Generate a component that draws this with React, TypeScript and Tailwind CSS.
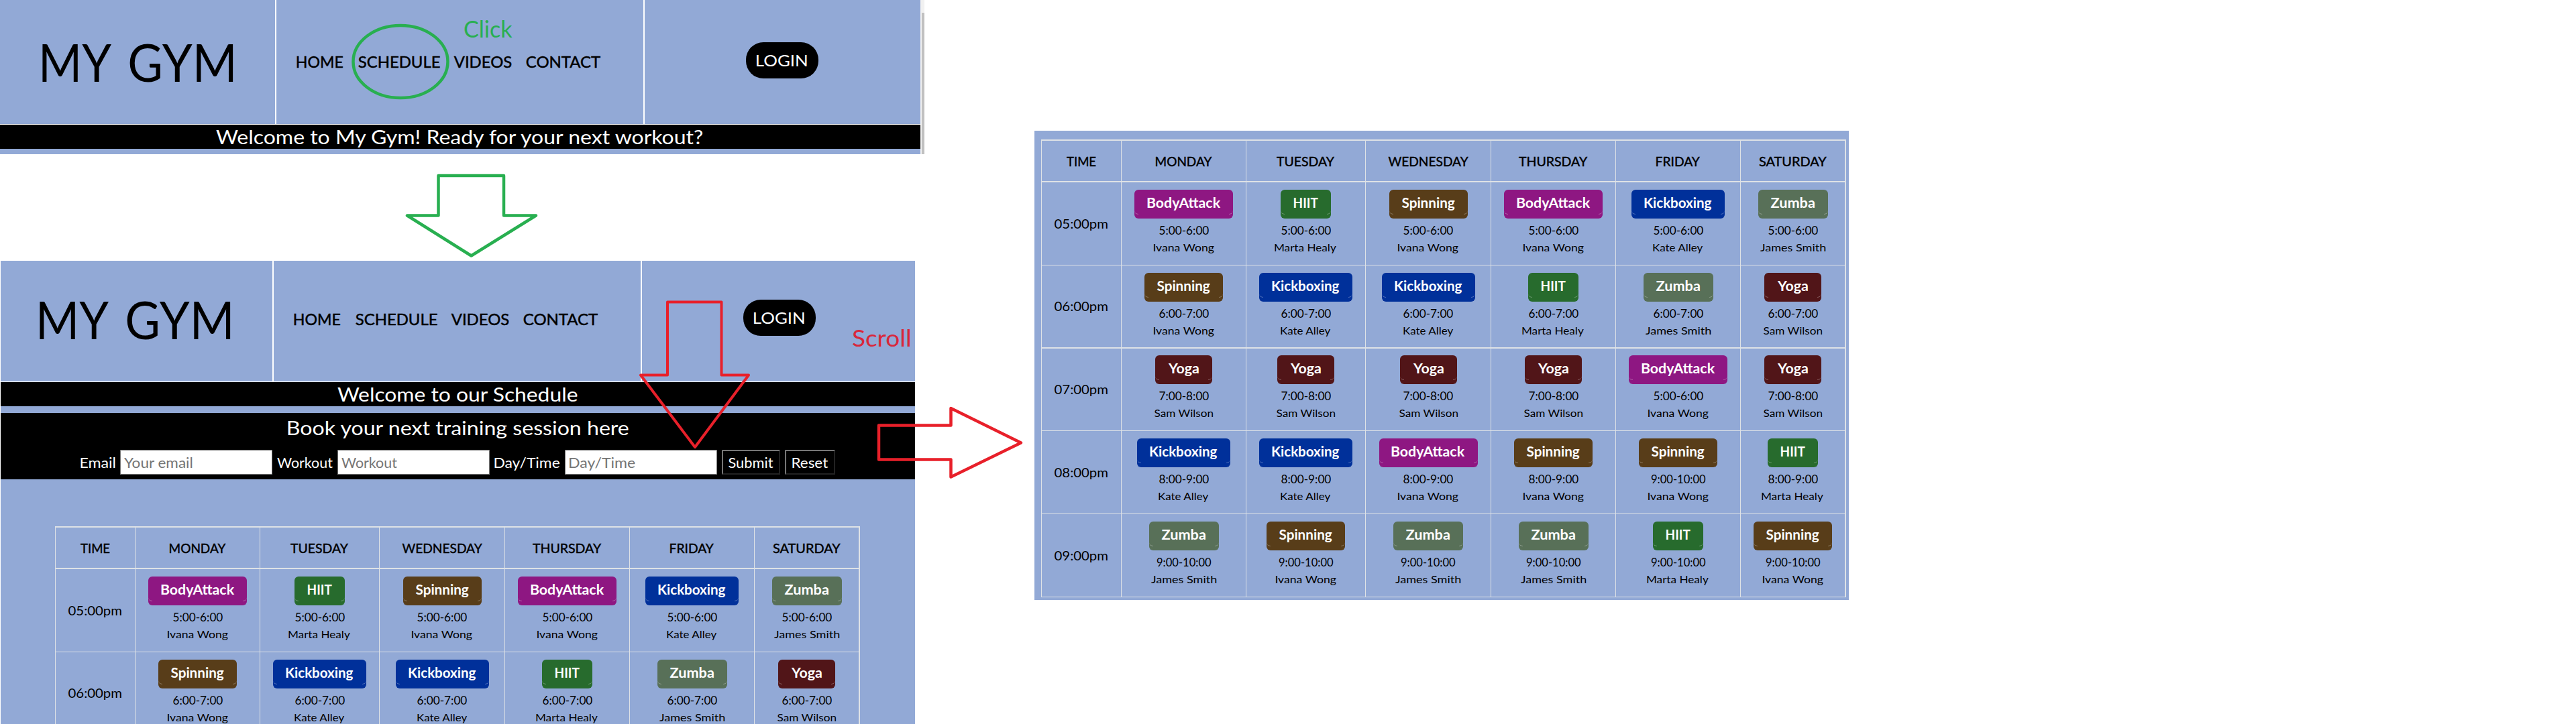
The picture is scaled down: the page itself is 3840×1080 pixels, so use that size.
import { useLayoutEffect, useRef, type ReactNode } from "react";

/** Text whose inked width is set to a given number of pixels. */
function Fit({ w, children, className = "" }: { w: number; children: string; className?: string }) {
  const ref = useRef<HTMLSpanElement>(null);
  useLayoutEffect(() => {
    const el = ref.current;
    if (!el) return;
    const cs = getComputedStyle(el);
    const ctx = document.createElement("canvas").getContext("2d");
    if (!ctx) return;
    ctx.font = `${cs.fontWeight} ${cs.fontSize} ${cs.fontFamily}`;
    const m = ctx.measureText(children);
    const r = el.offsetWidth / m.width;
    const ink = (m.actualBoundingBoxLeft + m.actualBoundingBoxRight) * r;
    const shift = ((m.width - (m.actualBoundingBoxRight - m.actualBoundingBoxLeft)) / 2) * r;
    const k = w / ink;
    el.style.transform = `translateX(${shift * k}px) scaleX(${k})`;
  }, [w, children]);
  return (
    <span className={"inline-flex justify-center whitespace-nowrap " + className} style={{ width: w }}>
      <span ref={ref} className="inline-block shrink-0">
        {children}
      </span>
    </span>
  );
}

const NAV: [string, number][] = [
  ["HOME", 68.5],
  ["SCHEDULE", 121.5],
  ["VIDEOS", 85.5],
  ["CONTACT", 110.5],
];

function Header({ tall }: { tall?: boolean }) {
  return (
    <header className={"flex border-b border-white " + (tall ? "h-[186px]" : "h-[181px]")}>
      <div className={"border-r-2 border-white " + (tall ? "w-[412px] pl-[63px] pt-11" : "w-[407px] pl-[58px] pt-[39px]")}>
        <h1 className="flex h-24 items-center gap-[27px] text-[77px] leading-none">
          <Fit w={103}>MY</Fit>
          <Fit w={155}>GYM</Fit>
        </h1>
      </div>
      <nav
        className={
          "flex w-[549px] items-start gap-[22px] border-r-2 border-white pl-[31px] text-2xl leading-6 [-webkit-text-stroke:0.5px_black] " +
          (tall ? "pt-20" : "pt-[75px]")
        }
      >
        {NAV.map(([t, w]) => (
          <Fit key={t} w={w}>
            {t}
          </Fit>
        ))}
      </nav>
      <div className={"pl-[151px] " + (tall ? "pt-[63px]" : "pt-[58px]")}>
        <button className="flex h-[54px] w-[108px] items-center justify-center rounded-[26px] bg-black text-2xl text-white">
          <Fit w={75}>LOGIN</Fit>
        </button>
      </div>
    </header>
  );
}

function Banner({ w, children }: { w: number; children: string }) {
  return (
    <div className="flex h-9 items-center justify-center bg-black pr-0.5 text-[28.5px] leading-9 text-white">
      <Fit w={w}>{children}</Fit>
    </div>
  );
}

function Field({ w, label, pw, placeholder }: { w: number; label: string; pw: number; placeholder: string }) {
  return (
    <label className="flex items-center gap-[7px]">
      <Fit w={w}>{label}</Fit>
      <span className="flex h-[37px] w-[227px] items-center border border-[#767676] bg-white pl-[5px] text-[#757575]">
        <Fit w={pw}>{placeholder}</Fit>
      </span>
    </label>
  );
}

const DAYS: [string, number][] = [
  ["TIME", 44],
  ["MONDAY", 84],
  ["TUESDAY", 86],
  ["WEDNESDAY", 120],
  ["THURSDAY", 103],
  ["FRIDAY", 66],
  ["SATURDAY", 101],
];

const CLASSES: Record<string, { bg: string; w: number }> = {
  BodyAttack: { bg: "bg-[#8e1782] w-[147px]", w: 109 },
  HIIT: { bg: "bg-[#276b2d] w-[75px]", w: 36 },
  Spinning: { bg: "bg-[#583d19] w-[117px]", w: 80 },
  Kickboxing: { bg: "bg-[#00309a] w-[139px]", w: 101 },
  Zumba: { bg: "bg-[#587058] w-[104px]", w: 66 },
  Yoga: { bg: "bg-[#511518] w-[85px]", w: 47 },
};

const TRAINERS: Record<string, number> = {
  "Ivana Wong": 90,
  "Marta Healy": 93,
  "Kate Alley": 75,
  "James Smith": 97,
  "Sam Wilson": 88,
};

const IW = "Ivana Wong";
const MH = "Marta Healy";
const KA = "Kate Alley";
const JS = "James Smith";
const SW = "Sam Wilson";

type Session = [string, string, string];
const ROWS: { time: string; h: string; pad: string; cells: Session[] }[] = [
  {
    time: "05:00pm",
    h: "h-[124px] border-b",
    pad: "pt-[11px]",
    cells: [
      ["BodyAttack", "5:00-6:00", IW],
      ["HIIT", "5:00-6:00", MH],
      ["Spinning", "5:00-6:00", IW],
      ["BodyAttack", "5:00-6:00", IW],
      ["Kickboxing", "5:00-6:00", KA],
      ["Zumba", "5:00-6:00", JS],
    ],
  },
  {
    time: "06:00pm",
    h: "h-[124px] border-b-2",
    pad: "pt-[11px]",
    cells: [
      ["Spinning", "6:00-7:00", IW],
      ["Kickboxing", "6:00-7:00", KA],
      ["Kickboxing", "6:00-7:00", KA],
      ["HIIT", "6:00-7:00", MH],
      ["Zumba", "6:00-7:00", JS],
      ["Yoga", "6:00-7:00", SW],
    ],
  },
  {
    time: "07:00pm",
    h: "h-[123px] border-b",
    pad: "pt-2.5",
    cells: [
      ["Yoga", "7:00-8:00", SW],
      ["Yoga", "7:00-8:00", SW],
      ["Yoga", "7:00-8:00", SW],
      ["Yoga", "7:00-8:00", SW],
      ["BodyAttack", "5:00-6:00", IW],
      ["Yoga", "7:00-8:00", SW],
    ],
  },
  {
    time: "08:00pm",
    h: "h-[124px] border-b",
    pad: "pt-[11px]",
    cells: [
      ["Kickboxing", "8:00-9:00", KA],
      ["Kickboxing", "8:00-9:00", KA],
      ["BodyAttack", "8:00-9:00", IW],
      ["Spinning", "8:00-9:00", IW],
      ["Spinning", "9:00-10:00", IW],
      ["HIIT", "8:00-9:00", MH],
    ],
  },
  {
    time: "09:00pm",
    h: "h-[124px] border-b",
    pad: "pt-[11px]",
    cells: [
      ["Zumba", "9:00-10:00", JS],
      ["Spinning", "9:00-10:00", IW],
      ["Zumba", "9:00-10:00", JS],
      ["Zumba", "9:00-10:00", JS],
      ["HIIT", "9:00-10:00", MH],
      ["Spinning", "9:00-10:00", IW],
    ],
  },
];

function Row({ className, children }: { className: string; children: ReactNode }) {
  return (
    <div
      className={
        "grid grid-cols-[119px_186px_178px_187px_186px_186px_155px] divide-x divide-[#dee2e6] border-[#dee2e6] " + className
      }
    >
      {children}
    </div>
  );
}

function Badge({ name }: { name: string }) {
  return (
    <div
      className={
        "relative flex h-[43px] justify-center rounded-md pt-[7px] text-xl font-bold leading-6 text-white " + CLASSES[name].bg
      }
    >
      <Fit w={CLASSES[name].w}>{name}</Fit>
      {/* rounded lower corners of the inner pill */}
      <span className="absolute left-0 top-[31px] size-1.5 rounded-bl-md border-b border-white/30" />
      <span className="absolute right-0 top-[31px] size-1.5 rounded-br-md border-b border-white/30" />
    </div>
  );
}

function Schedule({ rows }: { rows: number }) {
  return (
    <div className="w-[1200px] shrink-0 border-l border-r-2 border-t-2 border-[#dee2e6]">
      <Row className="h-[62px] border-b-2">
        {DAYS.map(([d, w]) => (
          <div key={d} className="flex items-center justify-center text-xl [-webkit-text-stroke:0.45px_black]">
            <Fit w={w}>{d}</Fit>
          </div>
        ))}
      </Row>
      {ROWS.slice(0, rows).map((r) => (
        <Row key={r.time} className={r.h}>
          <div className="flex items-center justify-center pb-0.5 text-xl">
            <Fit w={80}>{r.time}</Fit>
          </div>
          {r.cells.map(([name, hours, trainer], i) => (
            <div key={i} className={"flex flex-col items-center " + r.pad}>
              <Badge name={name} />
              <div className="mt-[7px] flex h-[22px] text-[17px] leading-[22px]">
                <Fit w={hours.length > 9 ? 82 : 75}>{hours}</Fit>
              </div>
              <div className="mt-[3px] flex h-[22px] text-base leading-[22px]">
                <Fit w={TRAINERS[trainer]}>{trainer}</Fit>
              </div>
            </div>
          ))}
        </Row>
      ))}
    </div>
  );
}

export default function App() {
  return (
    <div className="relative flex h-[1080px] w-[3840px] items-start overflow-hidden bg-white font-[Lato,'Liberation_Sans',sans-serif] text-black">
      <div className="flex h-[1080px] w-[1542px] shrink-0 flex-col">
        <div className="flex h-[230px] shrink-0">
          <section className="w-[1372px] bg-[#92a9d6]">
            <Header tall />
            <Banner w={726}>Welcome to My Gym! Ready for your next workout?</Banner>
          </section>
          <div className="h-[230px] w-1.5 bg-[#f1f1f1] pl-0.5 pt-[19px]">
            <div className="h-[211px] w-1 bg-[#c1c1c1]" />
          </div>
        </div>

        <section className="ml-px mt-[159px] h-[691px] w-[1363px] shrink-0 overflow-hidden bg-[#92a9d6]">
          <Header />
          <Banner w={357}>Welcome to our Schedule</Banner>
          <div className="mt-2.5 h-[99px] bg-black text-white">
            <div className="flex h-[44px] items-center justify-center text-[28.5px]">
              <Fit w={508}>Book your next training session here</Fit>
            </div>
            <form className="mt-[11px] flex items-center gap-[7px] pl-[118px] text-[21px] leading-6">
              <Field w={53} label="Email" pw={102} placeholder="Your email" />
              <Field w={83} label="Workout" pw={83} placeholder="Workout" />
              <Field w={98} label="Day/Time" pw={99} placeholder="Day/Time" />
              <button
                type="button"
                className="flex h-[37px] w-[87px] items-center justify-center border-2 border-b-[#222] border-l-[#767676] border-r-[#222] border-t-[#767676]"
              >
                <Fit w={68}>Submit</Fit>
              </button>
              <button
                type="button"
                className="flex h-[37px] w-[75px] items-center justify-center border-2 border-b-[#222] border-l-[#767676] border-r-[#222] border-t-[#767676]"
              >
                <Fit w={54}>Reset</Fit>
              </button>
            </form>
          </div>
          <div className="flex pl-[81px] pt-[70px]">
            <Schedule rows={2} />
          </div>
        </section>
      </div>

      <section className="mt-[195px] h-[700px] w-[1214px] shrink-0 bg-[#92a9d6] pl-2.5 pt-[13px]">
        <Schedule rows={5} />
      </section>

      {/* Walk-through annotations laid over the pages */}
      <svg className="pointer-events-none absolute left-0 top-0 h-[1080px] w-[1542px]" fill="none" strokeWidth="4.5" strokeLinejoin="round">
        <ellipse cx="597" cy="92" rx="70.5" ry="54" stroke="#28af50" />
        <path d="M653.5 262H751V321.5H799L702.5 381.5L607 321.5H653.5Z" stroke="#28af50" />
        <path d="M995 450.5H1075.5V559.5H1116L1036 667L955 559.5H995Z" stroke="#e8202a" strokeWidth="4" />
        <path d="M1310 634.5H1417.5V609L1522 660.5L1417.5 711.5V685.5H1310Z" stroke="#e8202a" />
      </svg>
      <div className="absolute left-[692px] top-[24px] text-[34px] leading-[38px] text-[#28af50]">
        <Fit w={72}>Click</Fit>
      </div>
      <div className="absolute left-[1271px] top-[485px] text-[34px] leading-[38px] text-[#d9263a]">
        <Fit w={86}>Scroll</Fit>
      </div>
    </div>
  );
}
